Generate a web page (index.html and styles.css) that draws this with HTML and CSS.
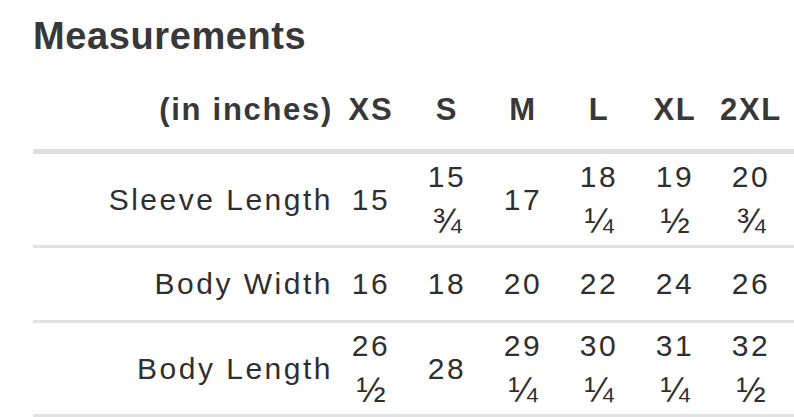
FILE: index.html
```html
<!DOCTYPE html>
<html lang="en">
<head>
<meta charset="utf-8">
<title>Measurements</title>
<link rel="stylesheet" href="styles.css">
</head>
<body>
<div class="sheet">
  <h1 class="title">Measurements</h1>
  <div class="chart">
    <div class="row head">
      <div class="label">(in inches)</div>
      <div class="cell">XS</div>
      <div class="cell">S</div>
      <div class="cell">M</div>
      <div class="cell">L</div>
      <div class="cell">XL</div>
      <div class="cell">2XL</div>
    </div>
    <div class="row">
      <div class="label">Sleeve Length</div>
      <div class="cell">15</div>
      <div class="cell">15<br><span class="frac">¾</span></div>
      <div class="cell">17</div>
      <div class="cell">18<br><span class="frac">¼</span></div>
      <div class="cell">19<br><span class="frac">½</span></div>
      <div class="cell">20<br><span class="frac">¾</span></div>
    </div>
    <div class="row">
      <div class="label">Body Width</div>
      <div class="cell">16</div>
      <div class="cell">18</div>
      <div class="cell">20</div>
      <div class="cell">22</div>
      <div class="cell">24</div>
      <div class="cell">26</div>
    </div>
    <div class="row">
      <div class="label">Body Length</div>
      <div class="cell">26<br><span class="frac">½</span></div>
      <div class="cell">28</div>
      <div class="cell">29<br><span class="frac">¼</span></div>
      <div class="cell">30<br><span class="frac">¼</span></div>
      <div class="cell">31<br><span class="frac">¼</span></div>
      <div class="cell">32<br><span class="frac">½</span></div>
    </div>
  </div>
</div>
</body>
</html>
```

FILE: styles.css
```css
html, body {
  margin: 0;
  padding: 0;
  background: #ffffff;
  overflow: hidden;
}

body {
  font-family: "Liberation Sans", Arial, sans-serif;
  color: #333333;
}

.sheet {
  padding-left: 33px;
}

.title {
  margin: 14px 0 0 0;
  font-size: 38px;
  line-height: 44px;
  font-weight: bold;
  color: #383838;
  letter-spacing: 0.6px;
}

.chart {
  margin-top: 29px;
}

.row {
  display: grid;
  grid-template-columns: 300px repeat(6, 76px);
  align-items: center;
  min-height: 72px;
  border-bottom: 3px solid #e2e2e2;
  font-size: 30px;
  line-height: 45.5px;
  letter-spacing: 2.5px;
  color: #2f2f2f;
}

.row.head {
  min-height: 0;
  padding-bottom: 16px;
  border-bottom: 5px solid #dedede;
  font-size: 31px;
  line-height: 46px;
  font-weight: bold;
  letter-spacing: 1.7px;
  color: #383838;
}

.label {
  text-align: right;
}

.cell {
  text-align: center;
}

.frac {
  font-size: 35px;
  line-height: 35px;
  letter-spacing: 0;
}
```
